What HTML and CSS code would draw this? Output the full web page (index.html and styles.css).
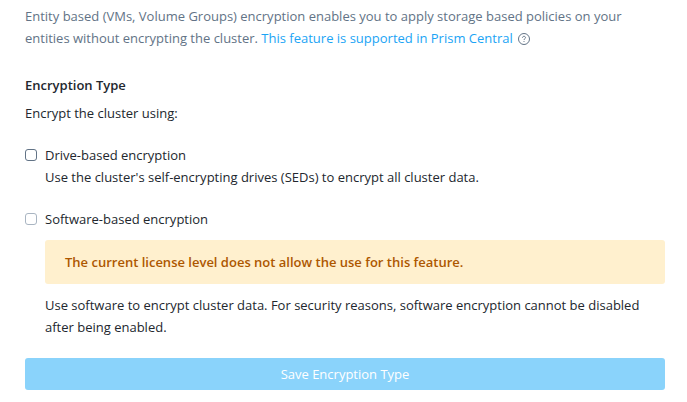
FILE: index.html
```
<!DOCTYPE html>
<html lang="en">
<head>
    <meta charset="UTF-8">
    <meta name="viewport" content="width=device-width, initial-scale=1.0">
    <title>Data-at-rest Encryption</title>
    <link rel="stylesheet" href="styles.css">
</head>
<body>
    <form class="encryption-form">
        <p class="intro">
            Entity based (VMs, Volume Groups) encryption enables you to apply storage based policies on your entities without encrypting the cluster.
            <a href="#">This feature is supported in Prism Central</a>
            <svg class="help-icon" viewBox="0 0 12 12" role="img" aria-label="Help">
                <circle cx="6" cy="6" r="5.5"/>
                <path d="M4.5 4.8C4.5 3.9 5.1 3.3 6 3.3S7.5 3.9 7.5 4.7C7.5 5.7 6 5.8 6 7"/>
                <path d="M6 8.1V9"/>
            </svg>
        </p>

        <h2>Encryption Type</h2>
        <p class="prompt">Encrypt the cluster using:</p>

        <div class="option">
            <input type="checkbox" id="drive-based">
            <label for="drive-based">Drive-based encryption</label>
            <p class="description">Use the cluster's self-encrypting drives (SEDs) to encrypt all cluster data.</p>
        </div>

        <div class="option">
            <input type="checkbox" id="software-based" disabled>
            <label for="software-based">Software-based encryption</label>
            <div class="alert">The current license level does not allow the use for this feature.</div>
            <p class="description">Use software to encrypt cluster data. For security reasons, software encryption cannot be disabled after being enabled.</p>
        </div>

        <button type="submit" class="save-button" disabled>Save Encryption Type</button>
    </form>
</body>
</html>
```

FILE: styles.css
```
* {
    box-sizing: border-box;
}
body {
    margin: 0;
    background-color: #ffffff;
    color: #22272e;
    font-family: "Open Sans", sans-serif;
    font-size: 13px;
    line-height: 22px;
}
h2, p {
    margin: 0;
}
.encryption-form {
    padding: 5px 22px 12px 25px;
}
.intro {
    color: #627386;
    margin-bottom: 25px;
}
.intro a {
    color: #1ba4f5;
    text-decoration: none;
}
.help-icon {
    width: 12px;
    height: 12px;
    margin-left: 2px;
    vertical-align: -2px;
    fill: none;
    stroke: #627386;
}
h2 {
    font-size: 13px;
    font-weight: 600;
    margin-bottom: 6px;
}
.prompt {
    margin-bottom: 20px;
}
.option {
    display: grid;
    grid-template-columns: 12px 1fr;
    column-gap: 8px;
    align-items: center;
    margin-bottom: 20px;
}
.option input {
    appearance: none;
    width: 12px;
    height: 12px;
    margin: 0;
    border: 1px solid #627386;
    border-radius: 3px;
    background-color: #ffffff;
}
.option input:disabled {
    border-color: #a9b5c2;
}
.description {
    grid-column: 2;
}
.alert {
    grid-column: 2;
    margin: 10px 0;
    padding: 11px 20px;
    border-radius: 3px;
    background-color: #fff0ce;
    color: #ad5700;
    font-weight: 600;
}
.save-button {
    display: block;
    width: 100%;
    height: 32px;
    padding: 0;
    border: none;
    border-radius: 3px;
    background-color: #8ad3fb;
    color: #ffffff;
    font: inherit;
}
```
